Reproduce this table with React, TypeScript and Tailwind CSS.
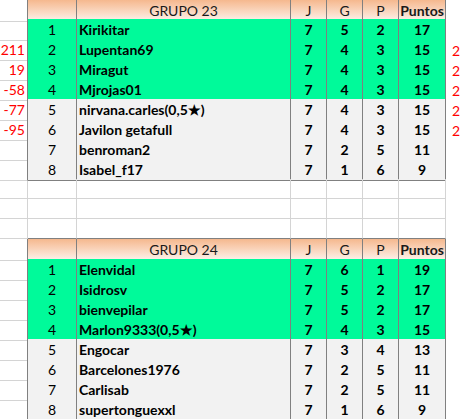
type Player = {
  pos: number;
  name: string;
  j: number;
  g: number;
  p: number;
  pts: number;
  left?: string;
  right?: string;
  green?: boolean;
};

const grupo23: Player[] = [
  { pos: 1, name: "Kirikitar", j: 7, g: 5, p: 2, pts: 17, green: true },
  { pos: 2, name: "Lupentan69", j: 7, g: 4, p: 3, pts: 15, left: "211", right: "2", green: true },
  { pos: 3, name: "Miragut", j: 7, g: 4, p: 3, pts: 15, left: "19", right: "2", green: true },
  { pos: 4, name: "Mjrojas01", j: 7, g: 4, p: 3, pts: 15, left: "-58", right: "2", green: true },
  { pos: 5, name: "nirvana.carles(0,5★)", j: 7, g: 4, p: 3, pts: 15, left: "-77", right: "2" },
  { pos: 6, name: "Javilon getafull", j: 7, g: 4, p: 3, pts: 15, left: "-95", right: "2" },
  { pos: 7, name: "benroman2", j: 7, g: 2, p: 5, pts: 11 },
  { pos: 8, name: "Isabel_f17", j: 7, g: 1, p: 6, pts: 9 },
];

const grupo24: Player[] = [
  { pos: 1, name: "Elenvidal", j: 7, g: 6, p: 1, pts: 19, green: true },
  { pos: 2, name: "Isidrosv", j: 7, g: 5, p: 2, pts: 17, green: true },
  { pos: 3, name: "bienvepilar", j: 7, g: 5, p: 2, pts: 17, green: true },
  { pos: 4, name: "Marlon9333(0,5★)", j: 7, g: 4, p: 3, pts: 15, green: true },
  { pos: 5, name: "Engocar", j: 7, g: 3, p: 4, pts: 13 },
  { pos: 6, name: "Barcelones1976", j: 7, g: 2, p: 5, pts: 11 },
  { pos: 7, name: "Carlisab", j: 7, g: 2, p: 5, pts: 11 },
  { pos: 8, name: "supertonguexxl", j: 7, g: 1, p: 6, pts: 9 },
];

const gridCols = "grid grid-cols-[28px_49px_214px_36px_36px_36px_47px_1fr]";

function Header({ title, height }: { title: string; height: string }) {
  const cell =
    "flex items-center justify-center border-r border-b border-[#808080] bg-gradient-to-b from-[#f5b88e] to-[#fcf1ea] text-[#1a1a1a]";
  return (
    <div className={`${gridCols} ${height}`}>
      <div className="border-r border-b border-r-[#808080] border-b-[#d4d4d4]" />
      <div className={cell} />
      <div className={cell}>{title}</div>
      <div className={cell}>J</div>
      <div className={cell}>G</div>
      <div className={cell}>P</div>
      <div className={`${cell} font-bold`}>Puntos</div>
      <div />
    </div>
  );
}

function PlayerRow({ row, last }: { row: Player; last?: boolean }) {
  const bg = row.green ? "bg-[#00fa9a]" : "bg-[#f2f2f2]";
  const cell = `flex items-center justify-center border-r border-b border-[#808080] ${bg}`;
  return (
    <div className={`${gridCols} h-[20px]`}>
      <div className="relative flex items-center justify-end border-r border-b border-r-[#808080] border-b-[#d4d4d4] pr-[2px] text-[#ff0000]">
        {row.left}
        {last && <div className="absolute bottom-[-2px] left-0 h-[2px] w-[29px] bg-[#217346]" />}
      </div>
      <div className={cell}>{row.pos}</div>
      <div className={`flex items-center border-r border-b border-[#808080] pl-[2px] font-bold ${bg}`}>
        {row.name}
      </div>
      <div className={`${cell} font-bold`}>{row.j}</div>
      <div className={`${cell} font-bold`}>{row.g}</div>
      <div className={`${cell} font-bold`}>{row.p}</div>
      <div className={`${cell} font-bold`}>{row.pts}</div>
      <div className="flex items-center pl-[6px] text-[#ff0000]">{row.right}</div>
    </div>
  );
}

function EmptyRow({ dark }: { dark?: boolean }) {
  const b = dark ? "border-b-[#808080]" : "border-b-[#d4d4d4]";
  return (
    <div className={`${gridCols} h-[20px]`}>
      <div className="border-r border-b border-r-[#d4d4d4] border-b-[#d4d4d4]" />
      <div className={`border-r border-b border-r-[#d4d4d4] ${b}`} />
      <div className={`border-r border-b border-r-[#d4d4d4] ${b}`} />
      <div className={`border-r border-b border-r-[#d4d4d4] ${b}`} />
      <div className={`border-r border-b border-r-[#d4d4d4] ${b}`} />
      <div className={`border-r border-b border-r-[#d4d4d4] ${b}`} />
      <div className={`border-r border-b border-r-[#d4d4d4] ${b}`} />
      <div />
    </div>
  );
}

export default function App() {
  return (
    <div className="h-[419px] w-[466px] overflow-hidden bg-white font-[Lato,sans-serif] text-[14px] text-black">
      <Header title="GRUPO 23" height="h-[19px]" />
      {grupo23.map((r) => (
        <PlayerRow key={r.pos} row={r} />
      ))}
      <EmptyRow />
      <EmptyRow />
      <EmptyRow dark />
      <Header title="GRUPO 24" height="h-[20px]" />
      {grupo24.map((r, i) => (
        <PlayerRow key={r.pos} row={r} last={i === grupo24.length - 1} />
      ))}
    </div>
  );
}
